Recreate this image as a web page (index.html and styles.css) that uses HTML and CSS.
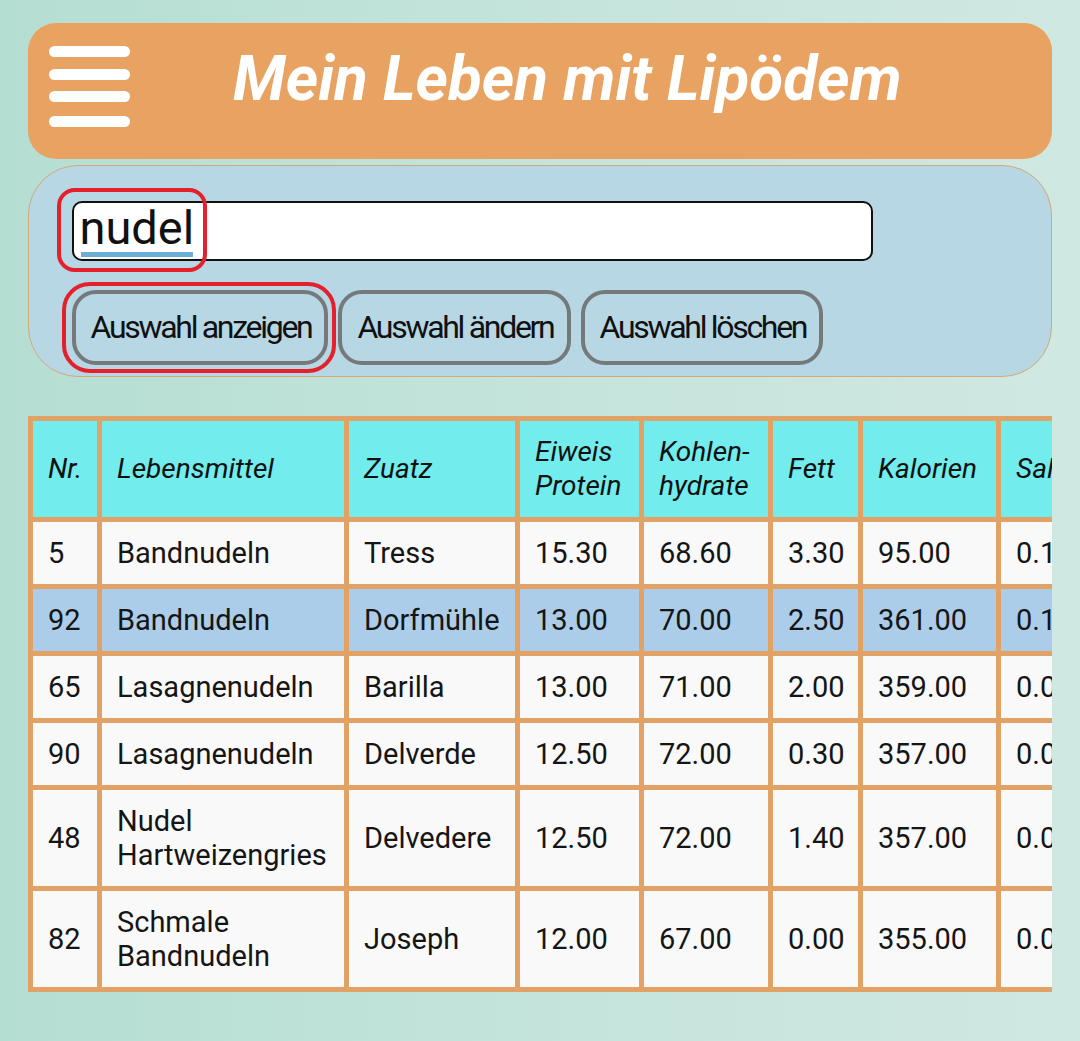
FILE: index.html
```html
<!DOCTYPE html>
<html lang="de">
<head>
<meta charset="utf-8">
<title>Mein Leben mit Lipödem</title>
<link rel="stylesheet" href="styles.css">
</head>
<body>
<div class="page">
  <header class="topbar">
    <svg class="burger" viewBox="0 0 86 92" width="86" height="92" aria-hidden="true">
      <g stroke="#ffffff" stroke-width="11" stroke-linecap="round">
        <line x1="7.5" y1="10.5" x2="77.5" y2="10.5"/>
        <line x1="7.5" y1="33.5" x2="77.5" y2="33.5"/>
        <line x1="7.5" y1="55.5" x2="77.5" y2="55.5"/>
        <line x1="7.5" y1="80.5" x2="77.5" y2="80.5"/>
      </g>
    </svg>
    <h1 class="title">Mein Leben mit Lipödem</h1>
  </header>

  <section class="search">
    <div class="field-wrap">
      <div class="field"><span class="query">nudel</span></div>
      <span class="mark mark-field"></span>
    </div>
    <div class="actions">
      <div class="btn-wrap">
        <button class="btn">Auswahl anzeigen</button>
        <span class="mark mark-btn"></span>
      </div>
      <button class="btn">Auswahl ändern</button>
      <button class="btn">Auswahl löschen</button>
    </div>
  </section>

  <div class="table-wrap">
    <table class="food">
      <colgroup>
        <col class="c-nr"><col class="c-name"><col class="c-brand"><col class="c-prot"><col class="c-carb"><col class="c-fat"><col class="c-kcal"><col class="c-salt">
      </colgroup>
      <thead>
        <tr>
          <th>Nr.</th><th>Lebensmittel</th><th>Zuatz</th><th>Eiweis<br>Protein</th><th>Kohlen-<br>hydrate</th><th>Fett</th><th>Kalorien</th><th>Salz</th>
        </tr>
      </thead>
      <tbody>
        <tr><td>5</td><td>Bandnudeln</td><td>Tress</td><td>15.30</td><td>68.60</td><td>3.30</td><td>95.00</td><td>0.10</td></tr>
        <tr class="sel"><td>92</td><td>Bandnudeln</td><td>Dorfmühle</td><td>13.00</td><td>70.00</td><td>2.50</td><td>361.00</td><td>0.10</td></tr>
        <tr><td>65</td><td>Lasagnenudeln</td><td>Barilla</td><td>13.00</td><td>71.00</td><td>2.00</td><td>359.00</td><td>0.00</td></tr>
        <tr><td>90</td><td>Lasagnenudeln</td><td>Delverde</td><td>12.50</td><td>72.00</td><td>0.30</td><td>357.00</td><td>0.00</td></tr>
        <tr><td>48</td><td>Nudel Hartweizengries</td><td>Delvedere</td><td>12.50</td><td>72.00</td><td>1.40</td><td>357.00</td><td>0.00</td></tr>
        <tr><td>82</td><td>Schmale Bandnudeln</td><td>Joseph</td><td>12.00</td><td>67.00</td><td>0.00</td><td>355.00</td><td>0.00</td></tr>
      </tbody>
    </table>
  </div>
</div>
</body>
</html>
```

FILE: styles.css
```css
html {
  min-height: 100%;
  background: linear-gradient(to right, #b5ded3 0%, #c4e4db 50%, #d0e8e2 100%);
}

body {
  margin: 0;
  min-height: 1041px;
  font-family: Roboto, "Noto Sans", sans-serif;
  color: #151515;
}

.page {
  padding: 23px 28px 0;
}

/* Header */
.topbar {
  display: flex;
  align-items: flex-start;
  height: 136px;
  background: #e8a362;
  border-radius: 28px;
}

.burger {
  display: block;
  flex: none;
  margin: 18px 0 0 19px;
}

.title {
  margin: 21px 0 0 100px;
  font-size: 62px;
  line-height: 70px;
  font-weight: 700;
  font-style: italic;
  color: #ffffff;
  white-space: nowrap;
}

/* Search panel */
.search {
  margin-top: 6px;
  background: #b6d7e3;
  border: 1.5px solid #d5a878;
  border-radius: 50px;
  padding: 34.5px 0 11.5px 42.5px;
}

.field-wrap {
  position: relative;
  width: 801px;
}

.field {
  box-sizing: border-box;
  height: 60px;
  background: #ffffff;
  border: 2px solid #111111;
  border-radius: 10px;
  padding: 0 0 6px 6px;
  font-size: 47px;
  line-height: 50px;
  color: #111111;
}

.query {
  position: relative;
}

.query::after {
  content: "";
  position: absolute;
  left: 1px;
  right: 1px;
  top: 52px;
  height: 5px;
  background: #6aaed6;
}

.mark {
  position: absolute;
  box-sizing: border-box;
  border: 4px solid #e3202c;
  pointer-events: none;
}

.mark-field {
  left: -15px;
  top: -13px;
  width: 150px;
  height: 84px;
  border-radius: 18px;
}

.actions {
  display: flex;
  gap: 10px;
  margin-top: 29px;
}

.btn-wrap {
  position: relative;
  display: flex;
}

.btn {
  height: 75px;
  box-sizing: border-box;
  padding: 0 13px 0 15px;
  background: transparent;
  border: 4px solid #76797b;
  border-radius: 24px;
  font-family: Roboto, "Noto Sans", sans-serif;
  font-size: 32px;
  letter-spacing: -2.3px;
  color: #111111;
  white-space: nowrap;
}

.mark-btn {
  left: -10px;
  top: -8px;
  right: -8px;
  bottom: -8px;
  border-radius: 28px;
}

/* Table */
.table-wrap {
  margin-top: 39px;
  width: 1024px;
  overflow: hidden;
}

.food {
  table-layout: fixed;
  width: 1078px;
  border-collapse: separate;
  border-spacing: 5px;
  background: #e3a265;
}

.c-nr { width: 64px; }
.c-name { width: 242px; }
.c-brand { width: 166px; }
.c-prot { width: 119px; }
.c-carb { width: 124px; }
.c-fat { width: 85px; }
.c-kcal { width: 133px; }
.c-salt { width: 100px; }

.food th,
.food td {
  padding: 14px 6px 14px 15px;
  line-height: 34px;
  text-align: left;
  vertical-align: middle;
  white-space: normal;
  overflow: hidden;
}

.food th {
  background: #72ecec;
  font-size: 28px;
  font-weight: 400;
  font-style: italic;
  color: #111111;
}

.food td {
  background: #f9f9f9;
  font-size: 29px;
  color: #151515;
}

.food tr.sel td {
  background: #abcde9;
}
```
